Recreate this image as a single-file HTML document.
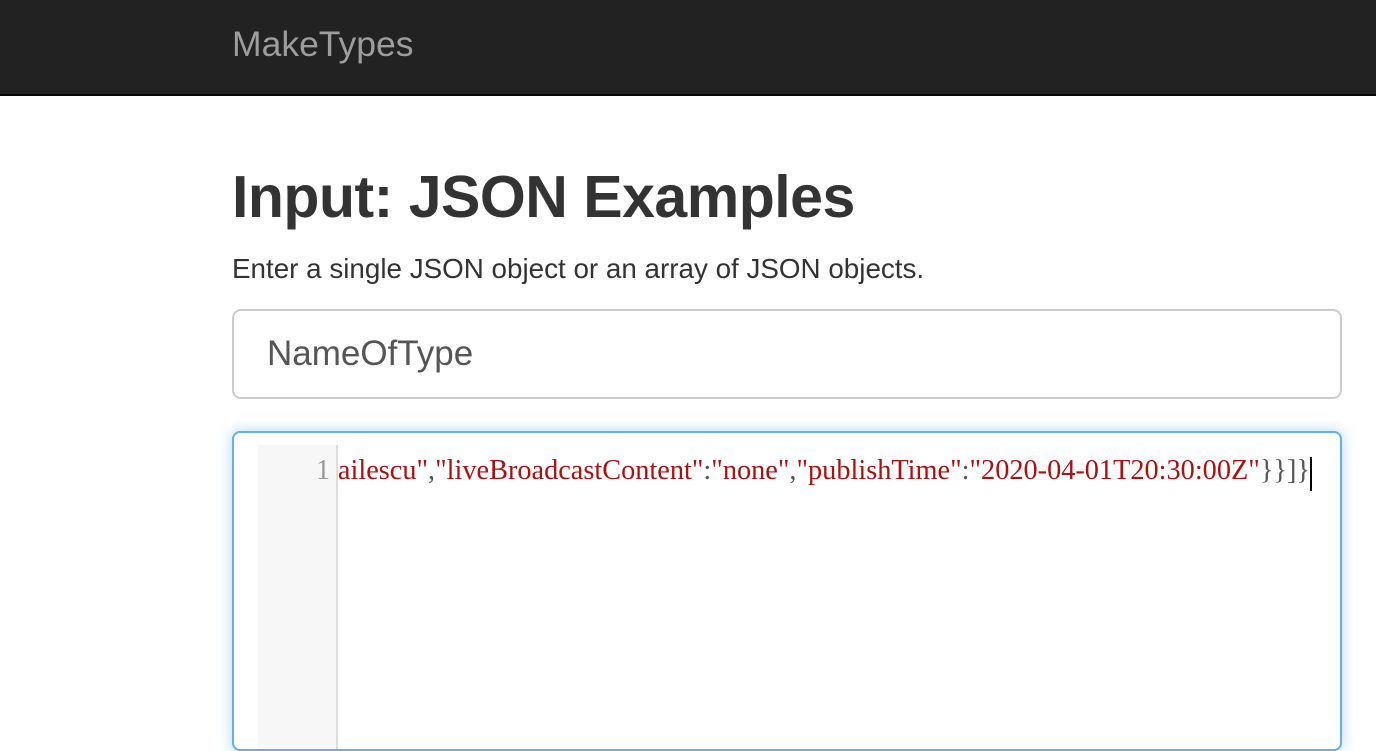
<!DOCTYPE html>
<html><head><meta charset="utf-8"><style>
*{margin:0;padding:0;box-sizing:border-box}
body{width:1376px;height:728px;overflow:hidden;background:#fff;font-family:"Liberation Sans",Arial,sans-serif;color:#333;position:relative}
.nav{position:absolute;left:0;top:0;width:1376px;height:96px;background:#222;border-bottom:2px solid #080808}
.brand{position:absolute;left:232px;top:22px;font-size:35.5px;color:#9d9d9d;line-height:44px}
h1{position:absolute;left:232px;top:162px;font-size:59px;font-weight:bold;line-height:70px;letter-spacing:-0.5px}
.sub{position:absolute;left:232px;top:252px;font-size:27.8px;line-height:34px}
.inp{position:absolute;left:232px;top:309px;width:1110px;height:90px;border:2px solid #ccc;border-radius:9px;font-size:35px;color:#555;padding-left:33px;line-height:86px}
.ed{position:absolute;left:232px;top:431px;width:1110px;height:320px;border:2px solid #66afe9;border-radius:8px;box-shadow:0 0 14px rgba(102,175,233,.5);overflow:hidden;background:#fff}
.gut{position:absolute;left:24px;top:12px;width:80px;height:400px;background:#f7f7f7;border-right:2px solid #ddd}
.ln{position:absolute;left:24px;top:22px;width:72px;text-align:right;font-family:"Liberation Serif",serif;font-size:28px;color:#999}
.code{position:absolute;left:104px;top:22px;width:972px;height:38px;overflow:hidden;font-family:"Liberation Serif",serif;font-size:28.3px;white-space:nowrap}
.code span.in{position:absolute;right:0;top:0}
.s{color:#a11}.p{color:#555}
.cur{position:absolute;left:1076px;top:24px;width:2px;height:34px;background:#000}
</style></head><body>
<div class="nav"><div class="brand">MakeTypes</div></div>
<h1>Input: JSON Examples</h1>
<div class="sub">Enter a single JSON object or an array of JSON objects.</div>
<div class="inp">NameOfType</div>
<div class="ed">
<div class="gut"></div>
<div class="ln">1</div>
<div class="code"><span class="in"><span class="s">"Mihailescu"</span><span class="p">,</span><span class="s">"liveBroadcastContent"</span><span class="p">:</span><span class="s">"none"</span><span class="p">,</span><span class="s">"publishTime"</span><span class="p">:</span><span class="s">"2020-04-01T20:30:00Z"</span><span class="p">}}]}</span></span></div>
<div class="cur"></div>
</div>
</body></html>
